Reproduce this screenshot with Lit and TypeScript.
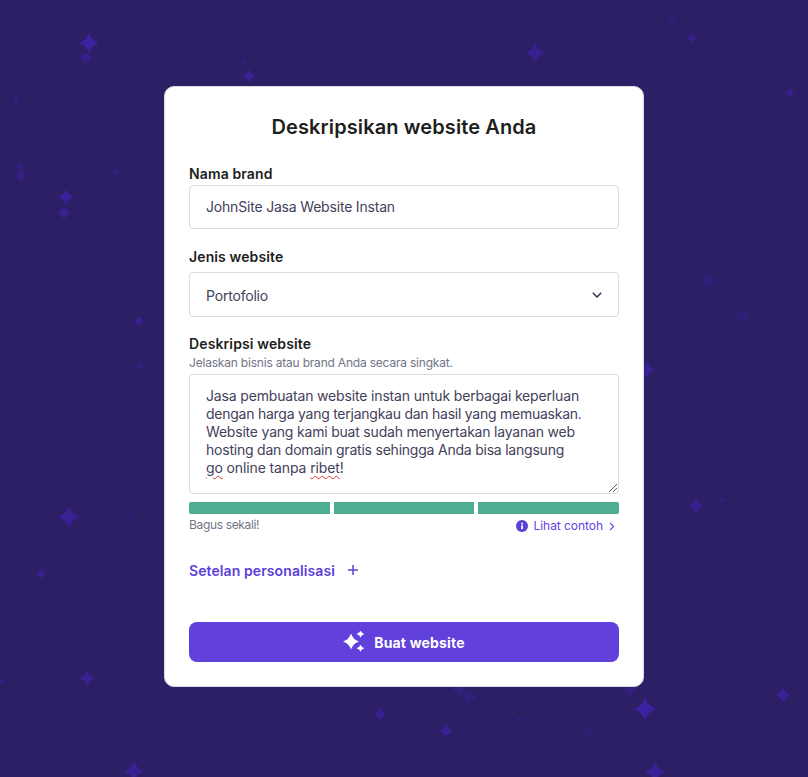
import { LitElement, html, css, svg } from "lit";
import { customElement } from "lit/decorators.js";

const S: [number, number, number, number][] = [
  [89, 43, 10, .9], [86, 58, 7, .6], [29, 28, 3, .25], [16, 99, 3, .6], [249, 76, 7, .75], [244, 62, 3, .4],
  [21, 176, 7, .5], [20, 166, 6, .4], [116, 173, 4, .35], [66, 197, 8, .8], [64, 213, 7, .7], [83, 130, 3, .12],
  [535, 53, 10, .65], [672, 21, 6, .3], [692, 38, 5, .6], [770, 50, 5, .15], [790, 93, 5, .6], [679, 236, 3, .3],
  [709, 281, 9, .3], [742, 317, 9, .28], [139, 321, 5, .7], [139, 366, 5, .25], [647, 370, 8, .75], [116, 447, 3, .12],
  [69, 517, 11, .7], [131, 514, 6, .2], [41, 574, 5, .7], [87, 678, 8, .7], [0, 681, 4, .6], [134, 771, 10, .7],
  [696, 506, 8, .65], [722, 500, 3, .4], [732, 516, 2, .4], [670, 455, 3, .12], [380, 714, 7, .65], [446, 731, 7, .7], [519, 720, 4, .35], [587, 732, 6, .2],
  [645, 709, 11, .95], [699, 715, 2, .4], [783, 695, 8, .7], [655, 772, 10, .8], [459, 690, 8, .35], [469, 697, 8, .35], [630, 690, 6, .5], [243, 716, 2, .3],
];

@customElement("app-root")
export class AppRoot extends LitElement {
  static styles = css`
    :host { display: block; position: relative; width: 100%; height: 777px; overflow: hidden; background: #2c1f66; font-family: "Inter", "Liberation Sans", sans-serif; color: #1d1e20; }
    .stars { position: absolute; inset: 0; width: 100%; height: 100%; }
    .page { position: relative; display: flex; justify-content: center; padding-top: 86px; }
    .card { box-sizing: border-box; width: 480px; height: 601px; background: #fff; border: 1px solid #dadce0; border-radius: 10px; padding: 24px; }
    h1 { margin: 0; height: 32px; font-size: 20px; line-height: 32px; font-weight: 600; text-align: center; letter-spacing: .1px; }
    .label { display: block; font-size: 14px; line-height: 20px; font-weight: 600; letter-spacing: .12px; }
    .field { box-sizing: border-box; display: flex; align-items: center; width: 430px; border: 1px solid #dadce0; border-radius: 4px; padding: 0 16px; font-size: 14px; color: #43415a; letter-spacing: -.19px; }
    .name { margin-top: 21px; }
    .input { height: 44px; margin-top: 1px; padding-bottom: 1px; }
    .type { margin-top: 18px; }
    .select { height: 45px; margin-top: 5px; justify-content: space-between; }
    .select span { position: relative; top: 1px; }
    .select svg { position: relative; top: 0; }
    .desc { margin-top: 17px; }
    .hint { font-size: 12px; line-height: 18px; color: #727586; letter-spacing: -.2px; }
    .area { position: relative; box-sizing: border-box; width: 430px; height: 120px; margin-top: 2px; border: 1px solid #dadce0; border-radius: 4px; padding: 12px 16px; font-size: 14px; line-height: 18px; color: #43415a; }
    .area div { white-space: nowrap; }
    .l1 { letter-spacing: -.16px; }
    .l2 { letter-spacing: -.25px; }
    .l3 { letter-spacing: -.2px; }
    .l4 { letter-spacing: -.22px; }
    .l5 { letter-spacing: -.12px; }
    .spell { text-decoration: underline wavy #e0392b 1px; text-underline-offset: 2px; }
    .grip { position: absolute; right: 1px; bottom: 1px; width: 9px; height: 9px; }
    .bars { display: flex; gap: 4px; width: 430px; margin-top: 8px; }
    .bars i { flex: 1; height: 12px; background: #4fae92; }
    .bars i:first-child { border-radius: 2px 0 0 2px; }
    .bars i:last-child { border-radius: 0 2px 2px 0; }
    .meta { display: flex; justify-content: space-between; width: 430px; margin-top: 3px; font-size: 12px; line-height: 16px; }
    .meta > span:first-child { color: #727586; letter-spacing: -.35px; }
    .see { display: flex; align-items: center; color: #673de6; margin-top: 1px; padding-right: 4px; letter-spacing: -.05px; }
    .see svg:first-child { margin-right: 6px; }
    .see svg:last-child { margin-left: 6px; }
    .perso { display: flex; align-items: center; gap: 13px; margin-top: 26px; height: 20px; color: #5b41d9; font-size: 14px; font-weight: 600; letter-spacing: .09px; }
    .btn { display: flex; align-items: center; justify-content: center; gap: 9px; width: 430px; height: 40px; margin-top: 42px; background: #6140db; border-radius: 8px; color: #fff; font-size: 14px; font-weight: 700; letter-spacing: .18px; }
  `;

  render() {
    return html`
      <svg class="stars" viewBox="0 0 808 777">
        ${S.map(([x, y, r, o]) => {
          const k = r * 0.26;
          return svg`<path fill="#3d22a6" fill-opacity=${o} d="M${x} ${y - r}Q${x + k} ${y - k} ${x + r} ${y}Q${x + k} ${y + k} ${x} ${y + r}Q${x - k} ${y + k} ${x - r} ${y}Q${x - k} ${y - k} ${x} ${y - r}Z"/>`;
        })}
      </svg>
      <div class="page">
        <div class="card">
          <h1>Deskripsikan website Anda</h1>
          <label class="label name">Nama brand</label>
          <div class="field input">JohnSite Jasa Website Instan</div>
          <label class="label type">Jenis website</label>
          <div class="field select">
            <span>Portofolio</span>
            <svg width="10" height="6" viewBox="0 0 10 6"><path d="M.8.8 5 5l4.200-4.200" fill="none" stroke="#36344d" stroke-width="1.5"/></svg>
          </div>
          <label class="label desc">Deskripsi website</label>
          <div class="hint">Jelaskan bisnis atau brand Anda secara singkat.</div>
          <div class="area">
            <div class="l1">Jasa pembuatan website instan untuk berbagai keperluan</div>
            <div class="l2">dengan harga yang terjangkau dan hasil yang memuaskan.</div>
            <div class="l3">Website yang kami buat sudah menyertakan layanan web</div>
            <div class="l4">hosting dan domain gratis sehingga Anda bisa langsung</div>
            <div class="l5"><span class="spell">go</span> online tanpa <span class="spell">ribet</span>!</div>
            <svg class="grip" viewBox="0 0 9 9"><path d="M1 9 9 1M5 9l4-4" stroke="#555" stroke-width="1" fill="none"/></svg>
          </div>
          <div class="bars"><i></i><i></i><i></i></div>
          <div class="meta">
            <span>Bagus sekali!</span>
            <span class="see">
              <svg width="12" height="12" viewBox="0 0 12 12"><circle cx="6" cy="6" r="6" fill="#5b3fd6"/><rect x="5.2" y="5.200" width="1.700" height="4" fill="#fff"/><rect x="5.2" y="2.800" width="1.700" height="1.600" fill="#fff"/></svg>
              Lihat contoh
              <svg width="6" height="9" viewBox="0 0 6 9"><path d="M1 .8 4.600 4.500 1 8.200" fill="none" stroke="#673de6" stroke-width="1.200"/></svg>
            </span>
          </div>
          <div class="perso">
            <span>Setelan personalisasi</span>
            <svg width="10" height="10" viewBox="0 0 10 10"><path d="M5 0v10M0 5h10" stroke="#5b41d9" stroke-width="1.500"/></svg>
          </div>
          <div class="btn">
            <svg width="22" height="22" viewBox="0 0 22 22" fill="#fff">
              <path d="M8 2.500Q10 8.500 16 10.500 10 12.500 8 18.500 6 12.500 0 10.500 6 8.500 8 2.500Z"/>
              <path d="M17.500 -.5Q18.400 2.100 21.500 3 18.400 3.900 17.500 6.500 16.600 3.900 13.500 3 16.600 2.100 17.500 -.5Z"/>
              <path d="M17.500 13.800Q18.400 16.400 21.500 17.300 18.400 18.200 17.500 20.800 16.600 18.200 13.500 17.300 16.600 16.400 17.500 13.800Z"/>
            </svg>
            Buat website
          </div>
        </div>
      </div>
    `;
  }
}
